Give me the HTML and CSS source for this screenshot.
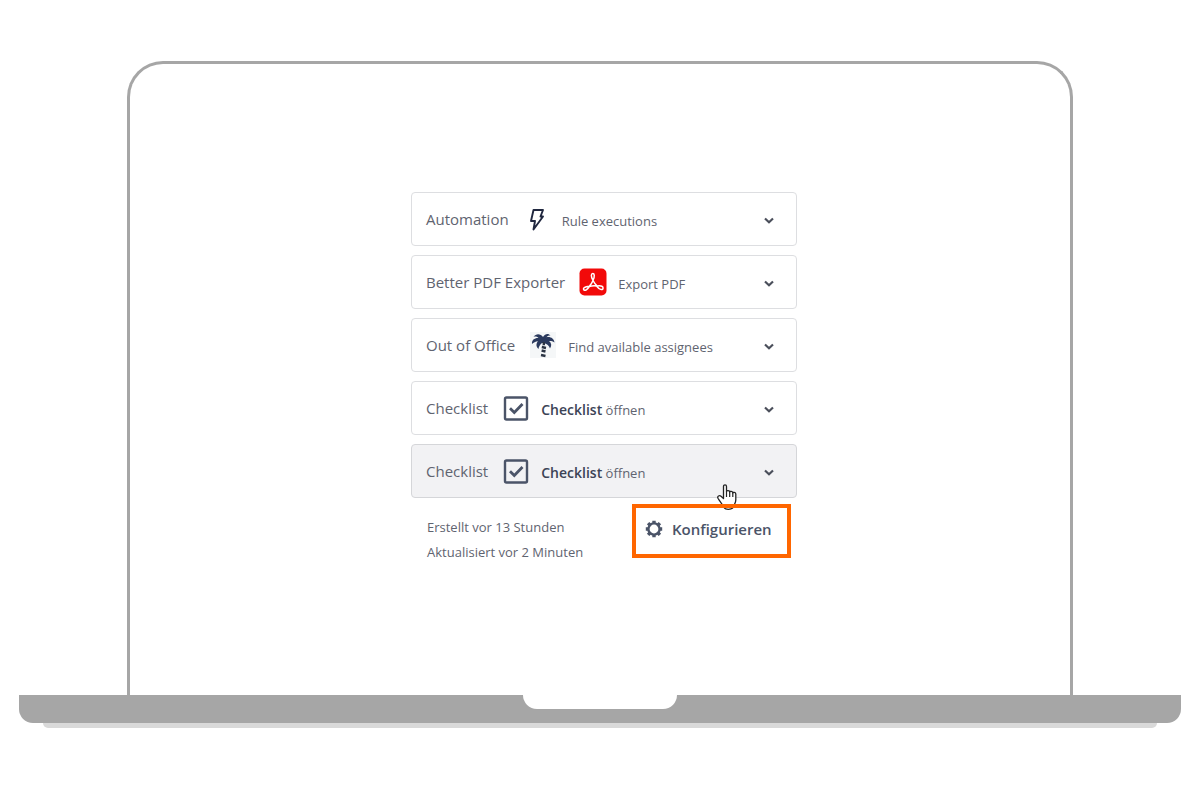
FILE: index.html
```
<!DOCTYPE html>
<html lang="de">
	<head>
		<meta charset="UTF-8">
		<title>Konfigurieren</title>
		<link rel="stylesheet" href="styles.css">
	</head>
	<body>

		<div class="laptop">
			<div class="screen">
				<div class="panel">

					<button type="button" class="row">
						<span class="name">Automation</span>
						<svg class="icon" viewBox="0 0 28 28"><path d="M10.5 5H20L17.5 11.5H20L10.5 24.5L12 16H8Z" fill="none" stroke="#20273f" stroke-width="1.9" stroke-linejoin="round"/></svg>
						<span class="action">Rule executions</span>
						<svg class="arrow" viewBox="0 0 12 12"><path d="M2 4.5L6 8.2L10 4.5"/></svg>
					</button>

					<button type="button" class="row">
						<span class="name">Better PDF Exporter</span>
						<svg class="icon" viewBox="0 0 28 28">
							<rect x="0.5" y="0.5" width="27" height="27" rx="5" fill="#f20a0a"/>
							<path d="M14 12.5C11.5 8 12.2 5.5 13.8 5.5S16 8 14 12.5C15.3 15 16.5 16.6 18.2 18C22.5 17.3 24.5 18.6 24 20.5S20.5 21.8 17.5 18C15 17.7 12.8 17.8 10.3 18.5C8 22.3 5.8 23 4.8 21.7S5.3 18.7 10.3 18.3C12 16.5 13 15 14 12.5Z" fill="none" stroke="#fff" stroke-width="1.5" stroke-linejoin="round"/>
						</svg>
						<span class="action">Export PDF</span>
						<svg class="arrow" viewBox="0 0 12 12"><path d="M2 4.5L6 8.2L10 4.5"/></svg>
					</button>

					<button type="button" class="row">
						<span class="name">Out of Office</span>
						<svg class="icon" viewBox="0 0 28 28">
							<rect x="1" y="1" width="26" height="26" fill="#f5f7f8"/>
							<path d="M14 6C16 2.5 19.5 2 21.5 4.5C19.5 4.3 18.5 5 17.5 6.2C21.5 5.3 25 7.5 25.5 11.5C23.5 10.2 22 9.8 20 10C22.5 12 23 14.5 21 17.5C20 14.5 18 13 15.5 12.2L13 12C11 13.5 9.8 15.5 9.5 18C6.8 15.5 7 12.3 9 10.2C6.5 10.5 4.5 11.5 3 13C2.5 9 5.5 6.8 9.5 7C8 5.6 6.5 5.2 4.5 5.7C7 2.3 11.5 2.3 14 6Z" fill="#2b3a5e"/>
							<path d="M14.8 11V14.2M12.8 16L17 17M12.6 19.5L16.5 20.5M12 24L16.5 25" fill="none" stroke="#2c3444" stroke-width="2.4"/>
						</svg>
						<span class="action">Find available assignees</span>
						<svg class="arrow" viewBox="0 0 12 12"><path d="M2 4.5L6 8.2L10 4.5"/></svg>
					</button>

					<button type="button" class="row">
						<span class="name">Checklist</span>
						<svg class="icon" viewBox="0 0 28 28">
							<rect x="3" y="3.5" width="22" height="22" rx="1.5" fill="none" stroke="#4b5468" stroke-width="2.4"/>
							<path d="M8 14.2L12.3 18.5L20.5 10" fill="none" stroke="#4b5468" stroke-width="2.8"/>
						</svg>
						<span class="action"><b>Checklist</b> öffnen</span>
						<svg class="arrow" viewBox="0 0 12 12"><path d="M2 4.5L6 8.2L10 4.5"/></svg>
					</button>

					<button type="button" class="row active">
						<span class="name">Checklist</span>
						<svg class="icon" viewBox="0 0 28 28">
							<rect x="3" y="3.5" width="22" height="22" rx="1.5" fill="none" stroke="#4b5468" stroke-width="2.4"/>
							<path d="M8 14.2L12.3 18.5L20.5 10" fill="none" stroke="#4b5468" stroke-width="2.8"/>
						</svg>
						<span class="action"><b>Checklist</b> öffnen</span>
						<svg class="arrow" viewBox="0 0 12 12"><path d="M2 4.5L6 8.2L10 4.5"/></svg>
					</button>

					<div class="footer">
						<div class="dates">
							<p>Erstellt vor 13 Stunden</p>
							<p>Aktualisiert vor 2 Minuten</p>
						</div>
						<button type="button" class="config">
							<svg class="gear" viewBox="0 0 18 18">
								<circle cx="9" cy="9" r="5.6" fill="none" stroke="#4b5468" stroke-width="2.4"/>
								<path d="M9 0.8V3.5M9 14.5V17.2M0.8 9H3.5M14.5 9H17.2M3.1 3.1L5 5M13 13L14.9 14.9M3.1 14.9L5 13M13 5L14.9 3.1" stroke="#4b5468" stroke-width="3.4"/>
							</svg>
							Konfigurieren
						</button>
						<!-- Mauszeiger -->
						<svg class="cursor" viewBox="0 0 22 28">
							<path d="M7.5 15.5V3.5C7.5 1.2 10.5 1.2 10.5 3.5V8.5C10.5 7.3 13.7 7.3 13.7 9C13.7 8 16.8 8 16.8 10C16.8 9 19.8 9.2 19.8 11V17C19.8 20 18 21.5 17.5 24C15 27.3 9.5 27.3 7.5 24C6.5 21 3.5 18 2 15.3C1 13.3 3.5 12 5 13.2Z" fill="#fff" stroke="#222" stroke-width="1.3" stroke-linejoin="round"/>
							<path d="M10.5 8.5V14M13.7 9V14M16.8 10V14" fill="none" stroke="#222" stroke-width="1.2"/>
						</svg>
					</div>

				</div>
			</div>
			<div class="base"><div class="notch"></div></div>
			<div class="shadow"></div>
		</div>

	</body>
</html>
```
FILE: styles.css
```
*{padding: 0;margin: 0;box-sizing: border-box;}

body{background: #fff;font-family: "Open Sans","Noto Sans",sans-serif;color: #5f6470;}

button{font-family: inherit;color: inherit;cursor: pointer;}

.laptop{padding: 61px 19px 0;}

.screen{margin: 0 108px;padding: 128px 20px 130px 28px;border: 3px solid #a6a6a6;border-bottom: 0;border-radius: 36px 36px 0 0;}

.base{height: 28px;background: #a6a6a6;border-radius: 0 0 14px 14px;}
.notch{width: 154px;height: 14px;margin: 0 auto;background: #fff;border-radius: 0 0 14px 14px;}
.shadow{height: 5px;margin: 0 24px;background: #d9d9d9;border-radius: 0 0 5px 5px;}


.panel{max-width: 386px;margin: 0 auto;display: flex;flex-direction: column;gap: 9px;}

.row{display: flex;align-items: center;height: 54px;padding: 0 21px 0 14px;background: #fff;border: 1px solid #dddee1;border-radius: 4px;text-align: left;}
.active{background: #f2f2f4;border-color: #d5d6d9;}

.name{font-size: 15px;line-height: 20px;}
.icon{width: 28px;height: 28px;margin: 0 11px 0 14px;}
.action{font-size: 13px;line-height: 20px;padding-top: 3px;}
.action b{font-size: 14px;font-weight: 600;color: #3c4356;}
.arrow{width: 12px;height: 12px;margin: 2px 0 0 auto;}
.arrow path{fill: none;stroke: #4b4f5b;stroke-width: 2.2;}


.footer{display: flex;justify-content: space-between;align-items: flex-start;padding: 0 6px 0 16px;margin-top: -3px;position: relative;}
.dates{padding-top: 11px;font-size: 13px;line-height: 25px;}

/* Rahmen liegt über dem Mauszeiger */
.config{display: flex;align-items: center;gap: 9px;width: 159px;height: 54px;padding: 0 0 4px 9px;background: none;border: 4px solid #ff6600;font-size: 15px;font-weight: 600;color: #4b5468;position: relative;z-index: 1;}
.gear{width: 18px;height: 18px;}

.cursor{position: absolute;right: 59px;top: -21px;width: 22px;height: 28px;}
```
